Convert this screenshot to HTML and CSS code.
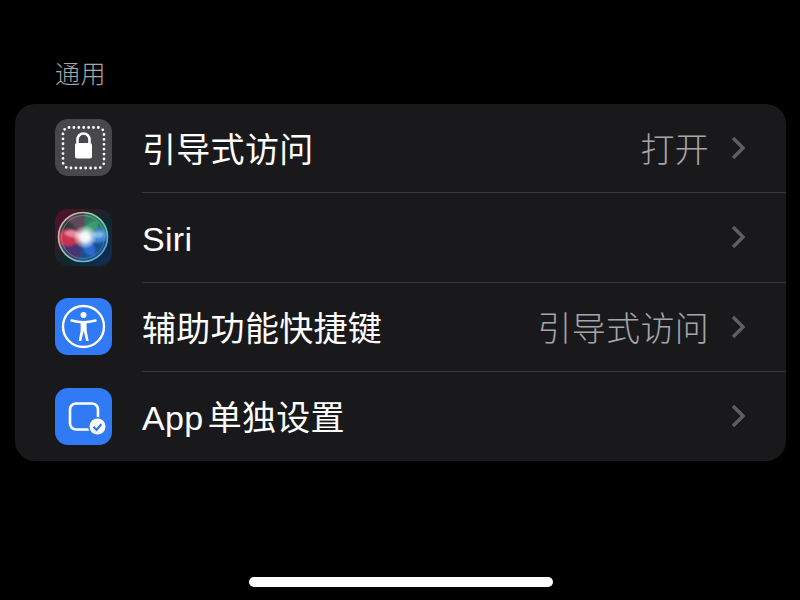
FILE: index.html
```html
<!DOCTYPE html>
<html lang="zh-CN">
  <head>
    <meta charset="UTF-8" />
    <title>通用</title>
    <link rel="stylesheet" href="styles.css">
  </head>
  <body>
    <div class="screen">
      <h2 class="section-title">通用</h2>
      <div class="card">
        <div class="row">
          <div class="icon icon-gray">
            <svg viewBox="0 0 57 57" width="57" height="57">
              <rect x="8" y="8.5" width="41" height="40.5" rx="6" fill="none" stroke="#fff" stroke-width="2.8" stroke-linecap="round" stroke-dasharray="0 4.9"/>
              <path d="M22.5 24v-3.5a6 6 0 0 1 12 0V24" fill="none" stroke="#fff" stroke-width="2.6"/>
              <rect x="20" y="24" width="17" height="15.5" rx="2" fill="#fff"/>
            </svg>
          </div>
          <div class="row-body">
            <span class="row-label">引导式访问</span>
            <span class="row-value">打开</span>
            <svg class="chevron" viewBox="0 0 14 24" width="14" height="24"><path d="M2 2l10 10L2 22" fill="none" stroke="#5f5f63" stroke-width="3.4"/></svg>
          </div>
        </div>
        <div class="row">
          <div class="icon icon-siri">
            <svg viewBox="0 0 57 57" width="57" height="57">
              <defs>
                <radialGradient id="siriGlow">
                  <stop offset="0" stop-color="#fff"/>
                  <stop offset="0.35" stop-color="#fff" stop-opacity="0.9"/>
                  <stop offset="1" stop-color="#fff" stop-opacity="0"/>
                </radialGradient>
                <linearGradient id="siriRing" x1="0" y1="0.1" x2="1" y2="0.9">
                  <stop offset="0" stop-color="#e8a8b0"/>
                  <stop offset="0.45" stop-color="#86cfa4"/>
                  <stop offset="1" stop-color="#4f9fe8"/>
                </linearGradient>
                <filter id="siriSoft" x="-20%" y="-20%" width="140%" height="140%">
                  <feGaussianBlur stdDeviation="1"/>
                </filter>
                <clipPath id="siriClip"><circle cx="28" cy="28" r="25"/></clipPath>
              </defs>
              <circle cx="28" cy="28" r="25" fill="#2a3a40"/>
              <g clip-path="url(#siriClip)" filter="url(#siriSoft)">
                <path d="M29 28L8 6h30z" fill="#5e4a5a"/>
                <path d="M29 28L30 2l26 6 2 20z" fill="#2e7a5e"/>
                <path d="M29 28L56 30 50 56 22 56z" fill="#1c4f8c"/>
                <path d="M29 28L22 56 2 46 2 30z" fill="#4a3570"/>
                <path d="M3 29c1-11 16-14 26-1-8 10-24 13-26 1z" fill="#c9304f"/>
                <path d="M9 24c6-5 14-3 19 4-6 1-14 1-19-4z" fill="#e08aa0"/>
                <path d="M29 28c6-8 19-12 23-3 1 8-11 13-23 3z" fill="#3a8ad8"/>
                <path d="M37 25c4-3 10-3 12 0-2 5-8 5-12 0z" fill="#86b8e4"/>
                <path d="M29 28c-4 8 0 19 9 19 6-5-1-16-9-19z" fill="#2f6bd0"/>
                <path d="M29 28c-3-7 4-17 13-16 4 6-4 15-13 16z" fill="#3f9a78"/>
              </g>
              <circle cx="28" cy="28" r="24.5" fill="none" stroke="url(#siriRing)" stroke-width="1.6"/>
              <circle cx="28" cy="28" r="21.5" fill="none" stroke="url(#siriRing)" stroke-width="1" opacity="0.45"/>
              <circle cx="30" cy="28" r="12" fill="url(#siriGlow)"/>
            </svg>
          </div>
          <div class="row-body">
            <span class="row-label">Siri</span>
            <svg class="chevron" viewBox="0 0 14 24" width="14" height="24"><path d="M2 2l10 10L2 22" fill="none" stroke="#5f5f63" stroke-width="3.4"/></svg>
          </div>
        </div>
        <div class="row">
          <div class="icon icon-blue">
            <svg viewBox="0 0 57 57" width="57" height="57">
              <circle cx="28.5" cy="28.5" r="20.5" fill="none" stroke="#fff" stroke-width="2.4"/>
              <circle cx="28.5" cy="17" r="3" fill="#fff"/>
              <path d="M16.5 22.5q12 3.5 24 0" fill="none" stroke="#fff" stroke-width="2.4" stroke-linecap="round"/>
              <path d="M25.5 24.5h6l.2 8 2 10.5h-2.6l-2.4-10.2-2.4 10.2h-2.6l2-10.5z" fill="#fff"/>
            </svg>
          </div>
          <div class="row-body">
            <span class="row-label">辅助功能快捷键</span>
            <span class="row-value">引导式访问</span>
            <svg class="chevron" viewBox="0 0 14 24" width="14" height="24"><path d="M2 2l10 10L2 22" fill="none" stroke="#5f5f63" stroke-width="3.4"/></svg>
          </div>
        </div>
        <div class="row">
          <div class="icon icon-blue">
            <svg viewBox="0 0 57 57" width="57" height="57">
              <rect x="15" y="15.5" width="28" height="26" rx="6" fill="none" stroke="#fff" stroke-width="2.6"/>
              <circle cx="42.5" cy="38.5" r="9.5" fill="#307af6"/>
              <circle cx="42.5" cy="38.5" r="8" fill="#fff"/>
              <path d="M38.5 38.8l3 3 4.8-5.6" fill="none" stroke="#307af6" stroke-width="2.2"/>
            </svg>
          </div>
          <div class="row-body">
            <span class="row-label row-label-app">App 单独设置</span>
            <svg class="chevron" viewBox="0 0 14 24" width="14" height="24"><path d="M2 2l10 10L2 22" fill="none" stroke="#5f5f63" stroke-width="3.4"/></svg>
          </div>
        </div>
      </div>
      <div class="home-wrap"><div class="home-bar"></div></div>
    </div>
  </body>
</html>
```

FILE: styles.css
```css
html,
body {
  margin: 0;
  padding: 0;
  background-color: #000;
}

.screen {
  width: 800px;
  height: 600px;
  overflow: hidden;
  display: flex;
  flex-direction: column;
  font-family: "Liberation Sans", "Noto Sans CJK SC", sans-serif;
}

.section-title {
  margin: 60px 0 0 55px;
  height: 44px;
  font-size: 25px;
  line-height: 29px;
  font-weight: 300;
  letter-spacing: 0.5px;
  color: #a5a5aa;
}

.card {
  margin: 0 14px 0 15px;
  height: 357px;
  background-color: #19191b;
  border-radius: 20px;
  display: flex;
  flex-direction: column;
}

.row {
  flex: 1;
  display: flex;
  align-items: center;
  padding-left: 40px;
}

.icon {
  width: 57px;
  height: 57px;
  flex: none;
  border-radius: 13px;
  overflow: hidden;
  margin-right: 30px;
}

.row:nth-child(odd) .icon {
  margin-bottom: 2px;
}

.icon svg {
  display: block;
}

.icon-gray {
  background-color: #48484a;
}

.icon-blue {
  background-color: #307af6;
}

.icon-siri {
  background: linear-gradient(135deg, #5a0f2a, #10262c 55%, #0e2f58);
}

.row-body {
  flex: 1;
  align-self: stretch;
  display: flex;
  align-items: center;
  border-bottom: 1px solid #38383a;
  padding-right: 41px;
}

.row:last-child .row-body {
  border-bottom: none;
}

.row-label {
  flex: 1;
  font-size: 34px;
  line-height: 40px;
  padding-top: 4px;
  letter-spacing: 0.3px;
  color: #fff;
}

.row-label-app {
  word-spacing: -5.5px;
}

.row-value {
  font-size: 34px;
  line-height: 40px;
  padding-top: 4px;
  font-weight: 300;
  letter-spacing: 0.3px;
  color: #a5a5aa;
  margin-right: 22px;
}

.home-wrap {
  flex: 1;
  display: flex;
  justify-content: center;
  align-items: flex-end;
  padding-bottom: 13px;
  padding-left: 2px;
}

.home-bar {
  width: 304px;
  height: 10px;
  border-radius: 5px;
  background-color: #fff;
}
```
